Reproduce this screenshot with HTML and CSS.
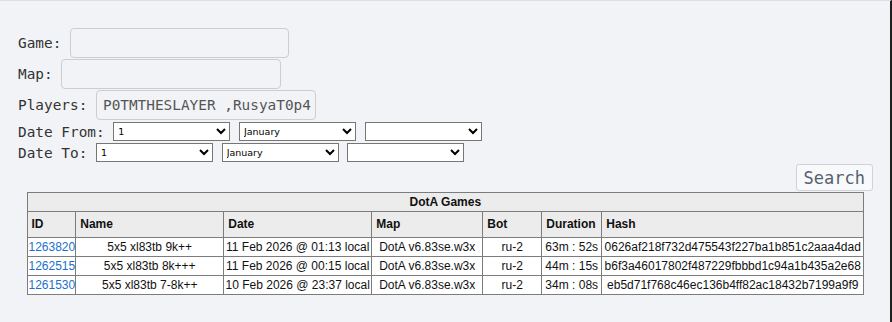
FILE: index.html
```html
<html>
<head>
    <meta charset="utf-8">
    <title>DotA Games search</title>
    <link rel="stylesheet" href="styles.css">
</head>
<body>
    <div id="page">
        <form class="search-form">
            <div class="field-row">
                <label class="field-label">Game:</label>
                <input type="text" class="text-field game-field">
            </div>
            <div class="field-row">
                <label class="field-label">Map:</label>
                <input type="text" class="text-field">
            </div>
            <div class="field-row">
                <label class="field-label">Players:</label>
                <input type="text" class="text-field" value="P0TMTHESLAYER ,RusyaT0p4">
            </div>
            <div class="date-row">
                <label class="field-label">Date From:</label>
                <select class="date-select"><option>1</option></select>
                <select class="date-select"><option>January</option></select>
                <select class="date-select"><option></option></select>
            </div>
            <div class="date-row">
                <label class="field-label">Date To:</label>
                <select class="date-select"><option>1</option></select>
                <select class="date-select"><option>January</option></select>
                <select class="date-select"><option></option></select>
            </div>
            <div class="button-row">
                <button type="button" class="search-button">Search</button>
            </div>
        </form>
        <table class="games-table">
            <colgroup>
                <col style="width: 47px">
                <col style="width: 148px">
                <col style="width: 148px">
                <col style="width: 111px">
                <col style="width: 59px">
                <col style="width: 60px">
                <col style="width: 262px">
            </colgroup>
            <tr>
                <th colspan="7" class="table-title">DotA Games</th>
            </tr>
            <tr>
                <th>ID</th>
                <th>Name</th>
                <th>Date</th>
                <th>Map</th>
                <th>Bot</th>
                <th>Duration</th>
                <th>Hash</th>
            </tr>
            <tr>
                <td class="id-cell"><a href="#">1263820</a></td>
                <td>5x5 xl83tb 9k++</td>
                <td>11 Feb 2026 @ 01:13 local</td>
                <td>DotA v6.83se.w3x</td>
                <td>ru-2</td>
                <td>63m : 52s</td>
                <td>0626af218f732d475543f227ba1b851c2aaa4dad</td>
            </tr>
            <tr>
                <td class="id-cell"><a href="#">1262515</a></td>
                <td>5x5 xl83tb 8k+++</td>
                <td>11 Feb 2026 @ 00:15 local</td>
                <td>DotA v6.83se.w3x</td>
                <td>ru-2</td>
                <td>44m : 15s</td>
                <td>b6f3a46017802f487229fbbbd1c94a1b435a2e68</td>
            </tr>
            <tr>
                <td class="id-cell"><a href="#">1261530</a></td>
                <td>5x5 xl83tb 7-8k++</td>
                <td>10 Feb 2026 @ 23:37 local</td>
                <td>DotA v6.83se.w3x</td>
                <td>ru-2</td>
                <td>34m : 08s</td>
                <td>eb5d71f768c46ec136b4ff82ac18432b7199a9f9</td>
            </tr>
        </table>
    </div>
</body>
</html>
```

FILE: styles.css
```css
body {
    margin: 0;
    padding: 0;
    background-color: #f2f3f7;
}
#page {
    height: 322px;
    box-sizing: border-box;
    border-top: 1px solid #dedfe4;
    border-right: 2px solid #1e1e1e;
    padding-top: 27px;
}
.search-form {
    margin: 0;
    padding: 0 17px 0 18px;
    font-family: 'DejaVu Sans Mono', monospace;
    font-size: 14.4px;
    color: #333;
}
.field-row {
    display: flex;
    align-items: center;
    gap: 8.67px;
    height: 30px;
    margin-bottom: 1px;
}
.date-row {
    display: flex;
    align-items: center;
    gap: 8.67px;
    height: 21px;
}
.text-field {
    box-sizing: border-box;
    width: 220px;
    height: 30px;
    margin: 0;
    padding: 0 4px 0 6px;
    border: 1px solid #cdcdcd;
    border-radius: 4px;
    background-color: transparent;
    font-family: inherit;
    font-size: 14.4px;
    color: #555;
}
.game-field {
    width: 219px;
}
.date-select {
    box-sizing: border-box;
    width: 117px;
    height: 19px;
    margin: 0;
    font-family: 'DejaVu Sans', sans-serif;
    font-size: 9.5px;
    color: #000;
    background-color: #fff;
}
.button-row {
    display: flex;
    justify-content: flex-end;
    height: 29px;
}
.search-button {
    box-sizing: border-box;
    height: 27px;
    margin-top: 1px;
    padding: 0 7px;
    border: 1px solid #cfd2d8;
    border-radius: 3px;
    background-color: #f8f9fb;
    font-family: 'DejaVu Sans Mono', monospace;
    font-size: 17px;
    color: #56606e;
}
.games-table {
    margin: 0 0 0 26.5px;
    table-layout: fixed;
    border-collapse: collapse;
    font-family: 'Liberation Sans', Arial, sans-serif;
    font-size: 12px;
    color: #111;
}
.games-table th,
.games-table td {
    border: 1px solid #7c7c7c;
    line-height: 14px;
    white-space: nowrap;
}
.games-table th {
    background-color: #ececec;
    text-align: left;
    padding: 5px 4px 6px 4px;
}
.games-table th.table-title {
    text-align: center;
    padding: 2px 4px;
}
.games-table td {
    background-color: #fff;
    text-align: center;
    padding: 2px 1px;
}
.games-table td.id-cell {
    text-align: left;
    padding-right: 0;
}
.games-table a {
    color: #1a6fcf;
    text-decoration: none;
}
```
